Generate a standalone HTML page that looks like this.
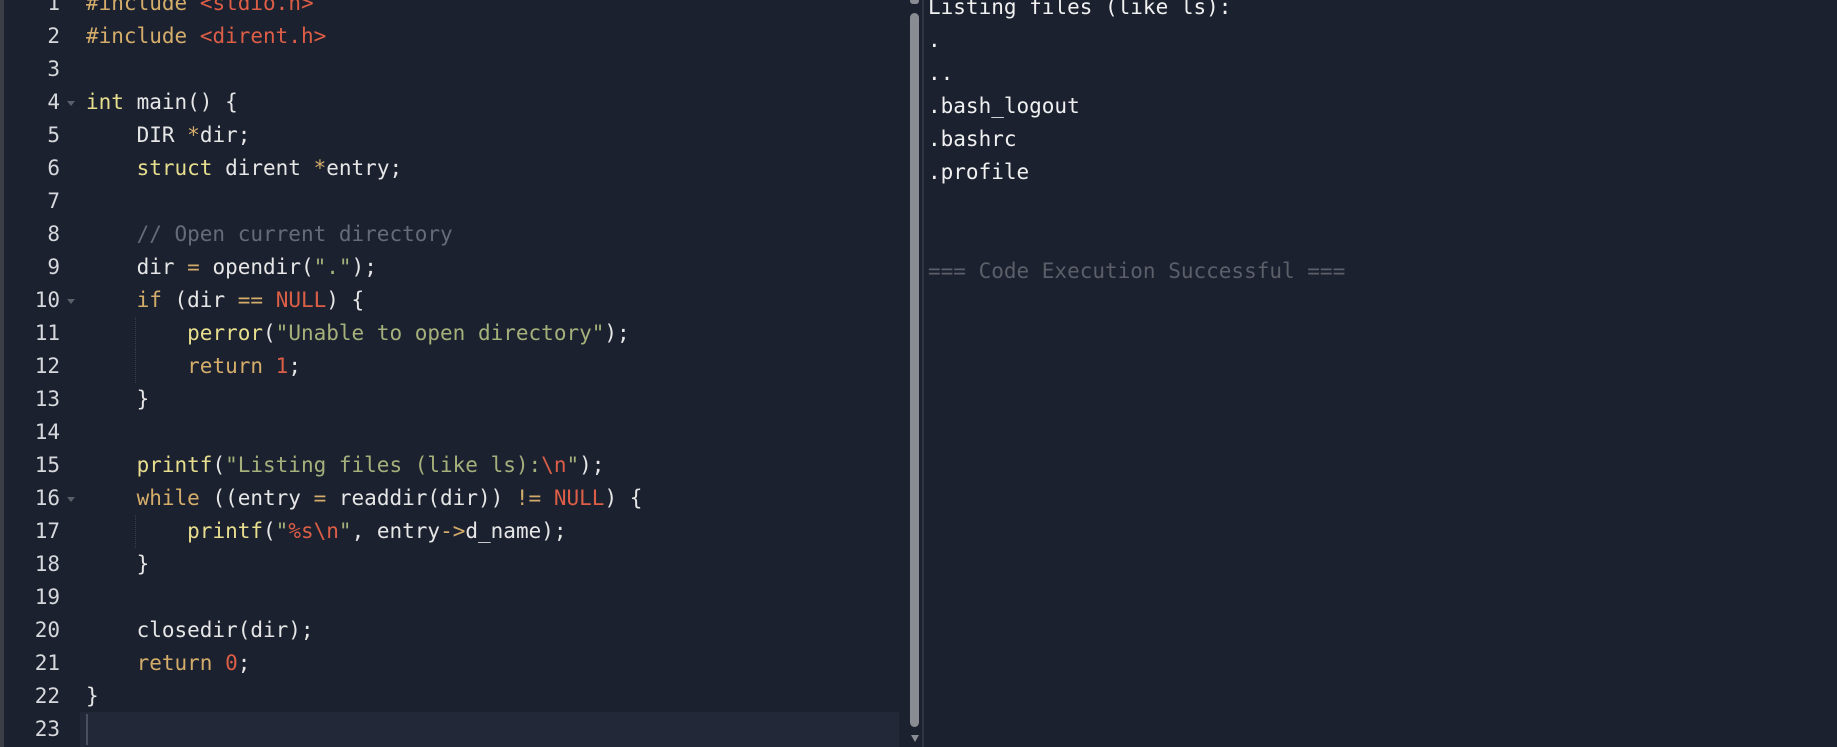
<!DOCTYPE html>
<html><head><meta charset="utf-8"><style>
html,body{margin:0;padding:0;width:1837px;height:747px;overflow:hidden;background:#1c2130;}
body{position:relative;font-family:"DejaVu Sans Mono","Liberation Mono",monospace;font-size:21px;}
.lb{position:absolute;left:0;top:0;width:4px;height:747px;background:#3b3e47;}
.hl{position:absolute;left:80px;top:712px;width:819px;height:35px;background:#232838;}
.cur{position:absolute;left:86px;top:714px;width:2px;height:31px;background:#4a4f5e;}
.ln{position:absolute;left:0;width:60px;text-align:right;color:#d6d8dc;line-height:33px;height:33px;}
.fold{position:absolute;left:67px;width:0;height:0;border-left:4px solid transparent;border-right:4px solid transparent;border-top:5px solid #5b5f6a;}
.code{position:absolute;left:86px;line-height:33px;height:33px;white-space:pre;color:#e6e6e6;}
.g{position:absolute;width:0;border-left:1px dotted #3a3f4e;height:33px;}
.k{color:#d4ad6a}.t{color:#e8df8e}.s{color:#a5b07a}.r{color:#dc5e46}.c{color:#666b7a}.f{color:#e8df8e}
.sb{position:absolute;left:910px;top:13px;width:9px;height:714px;background:#8a8c94;border-radius:5px;}
.sep{position:absolute;left:922px;top:0;width:2px;height:747px;background:#2f3442;}
.out{position:absolute;left:928px;line-height:33px;white-space:pre;color:#f0f0f0;}
#w{position:absolute;left:0;top:1px;width:1837px;height:747px;}
</style></head><body>
<div class="lb"></div>
<div class="hl"></div><div class="cur"></div>
<div class="sb"></div>
<div style="position:absolute;left:910px;top:0;width:9px;height:4px;background:#8a8c94;border-radius:0 0 3px 3px"></div>
<div style="position:absolute;left:911px;top:735px;width:0;height:0;border-left:4px solid transparent;border-right:4px solid transparent;border-top:7px solid #8a8c94"></div>
<div class="sep"></div>
<div id="w">
<div class="ln" style="top:-14px">1</div>
<div class="ln" style="top:19px">2</div>
<div class="ln" style="top:52px">3</div>
<div class="ln" style="top:85px">4</div>
<div class="ln" style="top:118px">5</div>
<div class="ln" style="top:151px">6</div>
<div class="ln" style="top:184px">7</div>
<div class="ln" style="top:217px">8</div>
<div class="ln" style="top:250px">9</div>
<div class="ln" style="top:283px">10</div>
<div class="ln" style="top:316px">11</div>
<div class="ln" style="top:349px">12</div>
<div class="ln" style="top:382px">13</div>
<div class="ln" style="top:415px">14</div>
<div class="ln" style="top:448px">15</div>
<div class="ln" style="top:481px">16</div>
<div class="ln" style="top:514px">17</div>
<div class="ln" style="top:547px">18</div>
<div class="ln" style="top:580px">19</div>
<div class="ln" style="top:613px">20</div>
<div class="ln" style="top:646px">21</div>
<div class="ln" style="top:679px">22</div>
<div class="ln" style="top:712px">23</div>

<div class="fold" style="top:100px"></div>
<div class="fold" style="top:298px"></div>
<div class="fold" style="top:496px"></div>

<div class="g" style="left:135px;top:316px"></div>
<div class="g" style="left:135px;top:349px"></div>
<div class="g" style="left:135px;top:514px"></div>

<div class="code" style="top:-14px"><span class="k">#include</span> <span class="r">&lt;stdio.h&gt;</span></div>
<div class="code" style="top:19px"><span class="k">#include</span> <span class="r">&lt;dirent.h&gt;</span></div>
<div class="code" style="top:85px"><span class="t">int</span> main() {</div>
<div class="code" style="top:118px">    DIR <span class="k">*</span>dir;</div>
<div class="code" style="top:151px">    <span class="t">struct</span> dirent <span class="k">*</span>entry;</div>
<div class="code" style="top:217px">    <span class="c">// Open current directory</span></div>
<div class="code" style="top:250px">    dir <span class="k">=</span> opendir(<span class="s">"."</span>);</div>
<div class="code" style="top:283px">    <span class="k">if</span> (dir <span class="k">==</span> <span class="r">NULL</span>) {</div>
<div class="code" style="top:316px">        <span class="f">perror</span>(<span class="s">"Unable to open directory"</span>);</div>
<div class="code" style="top:349px">        <span class="k">return</span> <span class="r">1</span>;</div>
<div class="code" style="top:382px">    }</div>
<div class="code" style="top:448px">    <span class="f">printf</span>(<span class="s">"Listing files (like ls):</span><span class="r">\n</span><span class="s">"</span>);</div>
<div class="code" style="top:481px">    <span class="k">while</span> ((entry <span class="k">=</span> readdir(dir)) <span class="k">!=</span> <span class="r">NULL</span>) {</div>
<div class="code" style="top:514px">        <span class="f">printf</span>(<span class="s">"</span><span class="r">%s\n</span><span class="s">"</span>, entry<span class="k">-&gt;</span>d_name);</div>
<div class="code" style="top:547px">    }</div>
<div class="code" style="top:613px">    closedir(dir);</div>
<div class="code" style="top:646px">    <span class="k">return</span> <span class="r">0</span>;</div>
<div class="code" style="top:679px">}</div>

<div class="out" style="top:-10px">Listing files (like ls):
.
..
.bash_logout
.bashrc
.profile


<span style="color:#5c5f68">=== Code Execution Successful ===</span></div>
</div>
</body></html>
